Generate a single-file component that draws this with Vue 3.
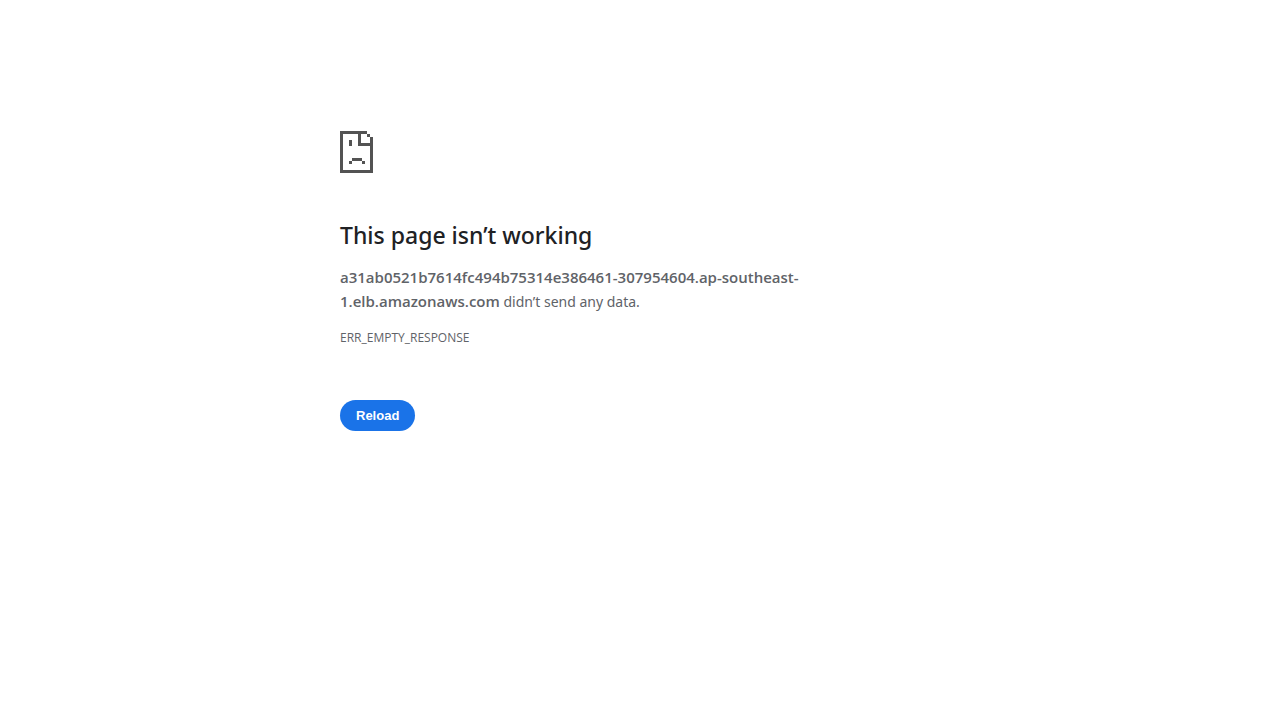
<script setup>
const reload = () => window.location.reload()
</script>

<template>
  <main class="page">
    <svg class="icon" viewBox="0 0 33 42" shape-rendering="crispEdges" aria-hidden="true">
      <path d="M0 0h27v3h-6v9h9V6h3v36H0zM3 3v36h27V15H18V3zM27 3h3v3h-3zM9 9h3v6H9zM12 27h10v3H12zM9 30h3v3H9zM22 30h3v3h-3z" fill-rule="evenodd" />
    </svg>
    <h1>This page isn’t working</h1>
    <p class="message"><strong>a31ab0521b7614fc494b75314e386461-307954604.ap-southeast-1.elb.amazonaws.com</strong> didn’t send any data.</p>
    <p class="code">ERR_EMPTY_RESPONSE</p>
    <button type="button" @click="reload">Reload</button>
  </main>
</template>

<style>
body {
  margin: 0;
  background: #fff;
}
</style>

<style scoped>
.page {
  box-sizing: border-box;
  max-width: 632px;
  margin: 0 auto;
  padding: 131px 16px 32px;
  font-family: "Segoe UI", "Noto Sans", "Open Sans", sans-serif;
  font-size: 14px;
  line-height: 24px;
  color: #5f6368;
}
.icon {
  display: block;
  width: 33px;
  height: 42px;
  fill: #535353;
}
h1 {
  margin: 48px 0 16px;
  font-size: 23px;
  font-weight: 500;
  line-height: 29px;
  color: #202124;
}
.message {
  max-width: 500px;
  margin: 0;
}
strong {
  font-family: "Segoe UI", "Open Sans", "Noto Sans", sans-serif;
  font-size: 15px;
  font-weight: 600;
  line-height: 20px;
}
.code {
  margin: 12px 0 0;
  font-family: "Segoe UI", "Open Sans", "Noto Sans", sans-serif;
  font-size: 12px;
}
button {
  display: block;
  height: 31px;
  margin-top: 50px;
  padding: 0 16px;
  border: 0;
  border-radius: 16px;
  background: #1a73e8;
  color: #fff;
  font-family: "Liberation Sans", Arial, sans-serif;
  font-size: 13px;
  font-weight: 600;
  cursor: pointer;
}
</style>
